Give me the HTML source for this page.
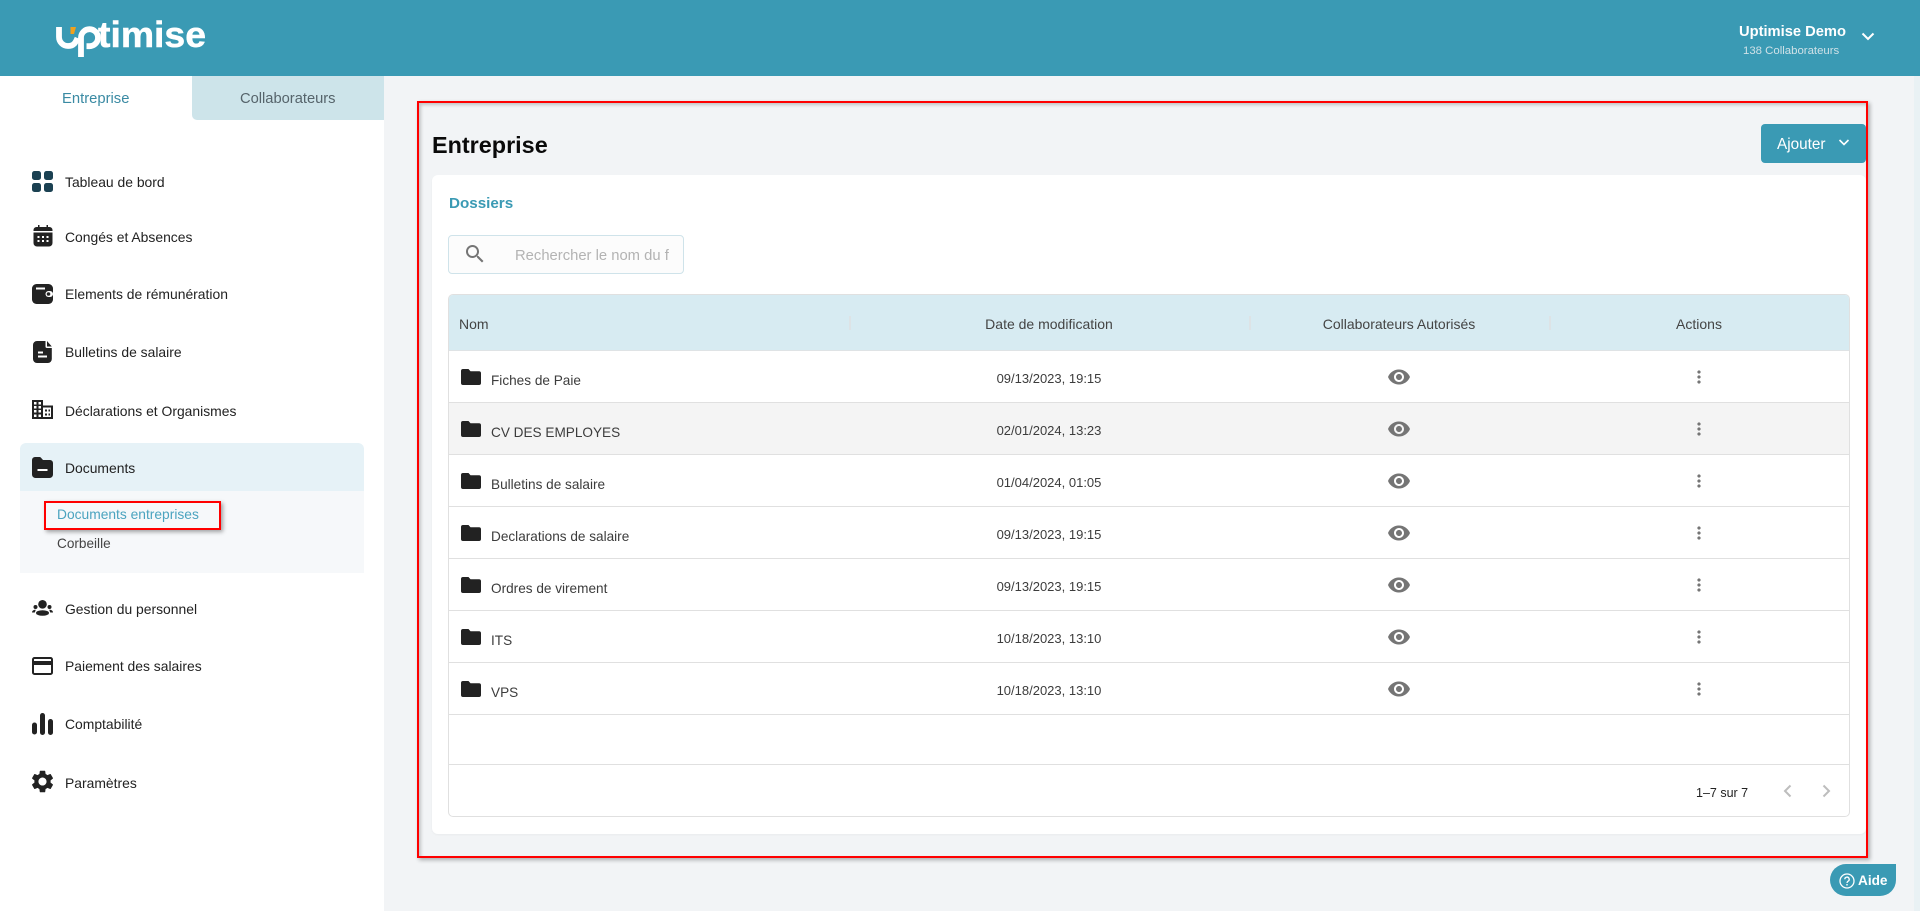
<!DOCTYPE html>
<html lang="fr"><head><meta charset="utf-8"><title>Uptimise</title>
<style>
*{box-sizing:border-box}
html,body{margin:0;padding:0;width:1920px;height:911px;overflow:hidden;background:#f2f4f6;font-family:"Liberation Sans",Arial,sans-serif;color:#222}
.a{position:absolute}
.t{position:absolute;white-space:nowrap;line-height:20px;height:20px}
.n{left:65px;font-size:13.9px;color:#222;margin-top:1px}
.i{position:absolute}
.th{font-size:14px;color:#444;top:314px;text-align:center}
.d{font-size:13px;color:#3c3c3c;text-align:center;width:300px;left:899px;margin-top:1px}
.f{font-size:13.6px;color:#3c3c3c;left:491px;margin-top:1px}
.l{position:absolute;left:449px;width:1400px;height:1px;background:#e0e0e0}
</style></head><body>
<div class="a" style="left:0;top:0;width:1920px;height:76px;background:#3a9ab4"></div>
<svg class="i" style="left:54px;top:16px" width="156" height="44" viewBox="0 0 156 44">
<path d="M5 11V21a9 9 0 0 0 9 9c5.500 0 7.500-3 9.500-8" fill="none" stroke="#fff" stroke-width="5.8"/>
<path d="M16.500 11h5.500l-2 7h-3.500z" fill="#f0a11c"/>
<path d="M27 41V21.500a8.500 8.500 0 1 1 8.500 8.700h-3" fill="none" stroke="#fff" stroke-width="5.8"/>
<text x="44" y="31" font-family="Liberation Sans" font-weight="700" font-size="36" fill="#fff" stroke="#fff" stroke-width=".5" textLength="108" lengthAdjust="spacingAndGlyphs">timise</text>
</svg>
<div class="t" style="left:1739px;top:22px;font-size:14.7px;font-weight:700;color:#fff">Uptimise Demo</div>
<div class="t" style="left:1743px;top:41px;font-size:11.4px;color:#cfe1e7">138 Collaborateurs</div>
<svg class="i" style="left:1861px;top:31px" width="14" height="11" viewBox="0 0 14 11"><path d="M1.500 2.500 7 8l5.500-5.500" fill="none" stroke="#fff" stroke-width="2"/></svg>

<div class="a" style="left:0;top:76px;width:384px;height:835px;background:#fff"></div>
<div class="a" style="left:192px;top:76px;width:192px;height:44px;background:#cde4ea;border-bottom-left-radius:5px"></div>
<div class="t" style="left:62px;top:89px;font-size:14.8px;color:#3a8aa3">Entreprise</div>
<div class="t" style="left:240px;top:89px;font-size:14.7px;color:#56646b">Collaborateurs</div>

<div class="a" style="left:20px;top:443px;width:344px;height:48px;background:#e6f2f7;border-radius:6px 6px 0 0"></div>
<div class="a" style="left:20px;top:491px;width:344px;height:82px;background:#f6f8fa"></div>

<svg class="i" style="left:32px;top:171px" width="21" height="21" viewBox="0 0 21 21" fill="#1b4152"><rect width="9" height="9" rx="2.500"/><rect x="12" width="9" height="9" rx="2.500"/><rect y="12" width="9" height="9" rx="2.500"/><rect x="12" y="12" width="9" height="9" rx="2.500"/></svg>
<div class="t n" style="top:171px">Tableau de bord</div>

<svg class="i" style="left:33px;top:225px" width="20" height="22" viewBox="0 0 20 22" fill="#222"><path d="M5 0h1.500v2h7V0H15v2h1.500A3 3 0 0 1 19.500 5v1H.5V5a3 3 0 0 1 3-3H5z"/><path d="M.5 7.500h19V18a3.500 3.500 0 0 1-3.500 3.500H4A3.500 3.500 0 0 1 .5 18z"/><g fill="#fff"><rect x="4.500" y="11" width="2" height="2"/><rect x="9" y="11" width="2" height="2"/><rect x="13.500" y="11" width="2" height="2"/><rect x="4.500" y="15" width="2" height="2"/><rect x="9" y="15" width="2" height="2"/><rect x="13.500" y="15" width="2" height="2"/></g></svg>
<div class="t n" style="top:226px">Congés et Absences</div>

<svg class="i" style="left:32px;top:284px" width="21" height="20" viewBox="0 0 21 20" fill="#222"><rect width="21" height="20" rx="4.500"/><rect x="4" y="3.500" width="9" height="2" fill="#fff"/><rect x="13.500" y="7" width="7.500" height="6" rx="3" fill="#fff"/><circle cx="16.500" cy="10" r="1.800" fill="#222"/></svg>
<div class="t n" style="top:283px">Elements de rémunération</div>

<svg class="i" style="left:33px;top:341px" width="19" height="22" viewBox="0 0 19 22" fill="#222"><path d="M4 0h8.500v5.500a1.500 1.500 0 0 0 1.500 1.500h4.800V18a4 4 0 0 1-4 4H4a4 4 0 0 1-4-4V4a4 4 0 0 1 4-4z"/><path d="M14 0l4.800 5.500H14z"/><rect x="5" y="10.500" width="5" height="2" fill="#fff"/><rect x="5" y="14.500" width="9" height="2" fill="#fff"/></svg>
<div class="t n" style="top:341px">Bulletins de salaire</div>

<svg class="i" style="left:32px;top:400px" width="21" height="19" viewBox="0 0 21 19" fill="#222"><path d="M0 0h11v5.500h10V19H0z"/><g fill="#fff"><rect x="2" y="2" width="2.500" height="2.500"/><rect x="6.500" y="2" width="2.500" height="2.500"/><rect x="2" y="6" width="2.500" height="2.500"/><rect x="6.500" y="6" width="2.500" height="2.500"/><rect x="2" y="10" width="2.500" height="2.500"/><rect x="6.500" y="10" width="2.500" height="2.500"/><rect x="2" y="14.500" width="2.500" height="2.500"/><rect x="6.500" y="14.500" width="2.500" height="2.500"/><rect x="11" y="7.500" width="8" height="9.500"/></g><g fill="#222"><rect x="13" y="9.500" width="2" height="2"/><rect x="16.500" y="9.500" width="1.500" height="2"/><rect x="13" y="13.500" width="2" height="2"/><rect x="16.500" y="13.500" width="1.500" height="2"/></g></svg>
<div class="t n" style="top:400px">Déclarations et Organismes</div>

<svg class="i" style="left:32px;top:457px" width="21" height="21" viewBox="0 0 21 21" fill="#222"><path d="M3 0h4.500a2 2 0 0 1 1.500.7L11 3h7a3 3 0 0 1 3 3v11.500a3.500 3.500 0 0 1-3.500 3.500h-14A3.500 3.500 0 0 1 0 17.500V3a3 3 0 0 1 3-3z"/><rect x="5.500" y="12" width="10" height="2" fill="#fff"/></svg>
<div class="t n" style="top:457px">Documents</div>

<div class="t" style="left:57px;top:505px;font-size:13.8px;color:#4ba3bf">Documents entreprises</div>
<div class="t" style="left:57px;top:534px;font-size:13.6px;color:#444">Corbeille</div>
<div class="a" style="left:44px;top:501px;width:177px;height:29px;border:2px solid #f00;box-shadow:2px 2px 4px rgba(0,0,0,.35)"></div>

<svg class="i" style="left:32px;top:600px" width="21" height="16" viewBox="0 0 21 16" fill="#222"><circle cx="10.500" cy="4.300" r="4.300"/><ellipse cx="10.500" cy="13" rx="6.500" ry="2.800"/><circle cx="3.500" cy="7" r="2"/><circle cx="17.500" cy="7" r="2"/><path d="M0 12.500c0-1.800 1.500-2.800 3.800-2.800L2.800 12.500z"/><path d="M21 12.500c0-1.800-1.500-2.800-3.800-2.800l1 2.800z"/></svg>
<div class="t n" style="top:598px">Gestion du personnel</div>

<svg class="i" style="left:32px;top:657px" width="21" height="18" viewBox="0 0 21 18"><rect x="1" y="1" width="19" height="16" rx="1.500" fill="none" stroke="#222" stroke-width="2"/><rect x="1" y="4" width="19" height="4" fill="#222"/></svg>
<div class="t n" style="top:655px">Paiement des salaires</div>

<svg class="i" style="left:32px;top:713px" width="21" height="22" viewBox="0 0 21 22" fill="#222"><rect y="9.500" width="5" height="12" rx="2.500"/><rect x="8" width="5" height="22" rx="2.500"/><rect x="16" y="6" width="5" height="16" rx="2.500"/></svg>
<div class="t n" style="top:713px">Comptabilité</div>

<svg class="i" style="left:29px;top:768px" width="27" height="27" viewBox="0 0 24 24" fill="#222"><path d="M19.140 12.940c.04-.3.060-.61.060-.94 0-.32-.02-.64-.07-.94l2.030-1.580c.18-.14.230-.41.120-.61l-1.920-3.320c-.12-.22-.37-.29-.59-.22l-2.390.96c-.5-.38-1.030-.7-1.620-.94l-.36-2.540c-.04-.24-.24-.41-.48-.41h-3.840c-.24 0-.43.170-.47.410l-.36 2.540c-.59.240-1.130.570-1.620.940l-2.390-.96c-.22-.08-.47 0-.59.220L2.740 8.870c-.12.210-.08.470.120.610l2.030 1.580c-.05.300-.09.630-.09.940s.020.640.070.940l-2.030 1.580c-.18.140-.23.410-.12.610l1.920 3.320c.120.220.370.290.590.220l2.390-.96c.500.380 1.030.700 1.620.940l.360 2.540c.050.240.240.410.480.410h3.840c.240 0 .440-.17.470-.41l.360-2.540c.590-.24 1.130-.56 1.620-.94l2.390.96c.220.080.470 0 .590-.22l1.920-3.320c.120-.22.070-.47-.12-.61l-2.010-1.580zM12 15.600c-1.980 0-3.600-1.620-3.600-3.600s1.620-3.600 3.600-3.600 3.600 1.620 3.600 3.600-1.620 3.600-3.600 3.600z"/></svg>
<div class="t n" style="top:772px">Paramètres</div>

<div class="a" style="left:1914px;top:76px;width:6px;height:835px;background:#e9f1f4"></div>

<div class="a" style="left:432px;top:175px;width:1434px;height:659px;background:#fff;border-radius:6px;box-shadow:0 1px 2px rgba(0,0,0,.04)"></div>
<div class="t" style="left:432px;top:135px;font-size:23.4px;font-weight:700;color:#0a0a0a;line-height:20px">Entreprise</div>
<div class="a" style="left:1761px;top:124px;width:105px;height:39px;background:#3a9ab4;border-radius:4px"></div>
<div class="t" style="left:1777px;top:135px;font-size:15.3px;color:#fff">Ajouter</div>
<svg class="i" style="left:1838px;top:138px" width="12" height="9" viewBox="0 0 12 9"><path d="M1.500 2 6 6.500 10.500 2" fill="none" stroke="#fff" stroke-width="1.600"/></svg>

<div class="t" style="left:449px;top:194px;font-size:15.2px;font-weight:700;color:#3a9ab4">Dossiers</div>
<div class="a" style="left:448px;top:235px;width:236px;height:39px;background:#fcfcfc;border:1px solid #cfe3ea;border-radius:4px"></div>
<svg class="i" style="left:463px;top:242px" width="24" height="24" viewBox="0 0 24 24" fill="#757575"><path d="M15.500 14h-.79l-.28-.27C15.410 12.590 16 11.110 16 9.500 16 5.910 13.090 3 9.500 3S3 5.910 3 9.500 5.910 16 9.500 16c1.610 0 3.090-.59 4.230-1.570l.27.28v.79l5 4.990L20.490 19l-4.990-5zm-6 0C7.010 14 5 11.990 5 9.500S7.010 5 9.500 5 14 7.010 14 9.500 11.990 14 9.500 14z"/></svg>
<div class="t" style="left:515px;top:246px;width:154px;overflow:hidden;font-size:14.8px;color:#b3b3b3">Rechercher le nom du fichier</div>

<div class="a" style="left:448px;top:294px;width:1402px;height:523px;border:1px solid #e0e0e0;border-radius:5px;overflow:hidden;background:#fff">
 <div class="a" style="left:0;top:0;width:1400px;height:56px;background:#d7ebf2;border-bottom:1px solid #dfe3e5"></div>
 <div class="a" style="left:0;top:108px;width:1400px;height:52px;background:#f4f4f4"></div>
</div>
<div class="t th" style="left:459px">Nom</div>
<div class="t th" style="left:899px;width:300px">Date de modification</div>
<div class="t th" style="left:1249px;width:300px">Collaborateurs Autorisés</div>
<div class="t th" style="left:1549px;width:300px">Actions</div>
<div class="a" style="left:849px;top:316px;width:2px;height:14px;background:#dde3e6"></div>
<div class="a" style="left:1249px;top:316px;width:2px;height:14px;background:#dde3e6"></div>
<div class="a" style="left:1549px;top:316px;width:2px;height:14px;background:#dde3e6"></div>

<div class="l" style="top:402px"></div>
<div class="l" style="top:454px"></div>
<div class="l" style="top:506px"></div>
<div class="l" style="top:558px"></div>
<div class="l" style="top:610px"></div>
<div class="l" style="top:662px"></div>
<div class="l" style="top:714px"></div>
<div class="l" style="top:764px"></div>

<svg width="0" height="0" style="position:absolute"><defs>
<symbol id="fo" viewBox="0 0 20 16"><path d="M2 0h5.500l2 2.200H18a2 2 0 0 1 2 2V14a2 2 0 0 1-2 2H2a2 2 0 0 1-2-2V2a2 2 0 0 1 2-2z" fill="#222"/></symbol>
<symbol id="ey" viewBox="0 0 24 24"><path fill="#757575" d="M12 4.500C7 4.500 2.730 7.610 1 12c1.730 4.390 6 7.500 11 7.500s9.270-3.110 11-7.500c-1.730-4.390-6-7.500-11-7.500zM12 17c-2.760 0-5-2.240-5-5s2.240-5 5-5 5 2.240 5 5-2.240 5-5 5zm0-8c-1.660 0-3 1.340-3 3s1.340 3 3 3 3-1.340 3-3-1.340-3-3-3z"/></symbol>
<symbol id="mv" viewBox="0 0 24 24"><path fill="#757575" d="M12 8c1.100 0 2-.9 2-2s-.9-2-2-2-2 .9-2 2 .9 2 2 2zm0 2c-1.100 0-2 .9-2 2s.9 2 2 2 2-.9 2-2-.9-2-2-2zm0 6c-1.100 0-2 .9-2 2s.9 2 2 2 2-.9 2-2-.9-2-2-2z"/></symbol>
</defs></svg>

<svg class="i" style="left:461px;top:369px" width="20" height="16"><use href="#fo"/></svg>
<div class="t f" style="top:370px">Fiches de Paie</div>
<div class="t d" style="top:368px">09/13/2023, 19:15</div>
<svg class="i" style="left:1387px;top:365px" width="24" height="24"><use href="#ey"/></svg>
<svg class="i" style="left:1689px;top:367px" width="20" height="20"><use href="#mv"/></svg>

<svg class="i" style="left:461px;top:421px" width="20" height="16"><use href="#fo"/></svg>
<div class="t f" style="top:422px">CV DES EMPLOYES</div>
<div class="t d" style="top:420px">02/01/2024, 13:23</div>
<svg class="i" style="left:1387px;top:417px" width="24" height="24"><use href="#ey"/></svg>
<svg class="i" style="left:1689px;top:419px" width="20" height="20"><use href="#mv"/></svg>

<svg class="i" style="left:461px;top:473px" width="20" height="16"><use href="#fo"/></svg>
<div class="t f" style="top:474px">Bulletins de salaire</div>
<div class="t d" style="top:472px">01/04/2024, 01:05</div>
<svg class="i" style="left:1387px;top:469px" width="24" height="24"><use href="#ey"/></svg>
<svg class="i" style="left:1689px;top:471px" width="20" height="20"><use href="#mv"/></svg>

<svg class="i" style="left:461px;top:525px" width="20" height="16"><use href="#fo"/></svg>
<div class="t f" style="top:526px">Declarations de salaire</div>
<div class="t d" style="top:524px">09/13/2023, 19:15</div>
<svg class="i" style="left:1387px;top:521px" width="24" height="24"><use href="#ey"/></svg>
<svg class="i" style="left:1689px;top:523px" width="20" height="20"><use href="#mv"/></svg>

<svg class="i" style="left:461px;top:577px" width="20" height="16"><use href="#fo"/></svg>
<div class="t f" style="top:578px">Ordres de virement</div>
<div class="t d" style="top:576px">09/13/2023, 19:15</div>
<svg class="i" style="left:1387px;top:573px" width="24" height="24"><use href="#ey"/></svg>
<svg class="i" style="left:1689px;top:575px" width="20" height="20"><use href="#mv"/></svg>

<svg class="i" style="left:461px;top:629px" width="20" height="16"><use href="#fo"/></svg>
<div class="t f" style="top:630px">ITS</div>
<div class="t d" style="top:628px">10/18/2023, 13:10</div>
<svg class="i" style="left:1387px;top:625px" width="24" height="24"><use href="#ey"/></svg>
<svg class="i" style="left:1689px;top:627px" width="20" height="20"><use href="#mv"/></svg>

<svg class="i" style="left:461px;top:681px" width="20" height="16"><use href="#fo"/></svg>
<div class="t f" style="top:682px">VPS</div>
<div class="t d" style="top:680px">10/18/2023, 13:10</div>
<svg class="i" style="left:1387px;top:677px" width="24" height="24"><use href="#ey"/></svg>
<svg class="i" style="left:1689px;top:679px" width="20" height="20"><use href="#mv"/></svg>

<div class="t" style="left:1696px;top:783px;font-size:12.5px;color:#222">1–7 sur 7</div>
<svg class="i" style="left:1781px;top:783px" width="12" height="16" viewBox="0 0 12 16"><path d="M9.500 2.500 4 8l5.500 5.500" fill="none" stroke="#bdbdbd" stroke-width="2"/></svg>
<svg class="i" style="left:1821px;top:783px" width="12" height="16" viewBox="0 0 12 16"><path d="M2.500 2.500 8 8l-5.500 5.500" fill="none" stroke="#bdbdbd" stroke-width="2"/></svg>

<div class="a" style="left:417px;top:101px;width:1451px;height:757px;border:2px solid #f00;box-shadow:2px 2px 4px rgba(0,0,0,.3),inset 2px 2px 3px rgba(0,0,0,.2)"></div>

<div class="a" style="left:1830px;top:864px;width:66px;height:32px;background:#3a9ab4;border-radius:16px 0 16px 16px"></div>
<svg class="i" style="left:1839px;top:873px" width="16" height="16" viewBox="0 0 16 16"><circle cx="8" cy="8" r="7" fill="none" stroke="#fff" stroke-width="1.300"/><path d="M5.800 6.300a2.200 2.200 0 1 1 3.300 1.900c-.8.500-1.100.9-1.100 1.800" fill="none" stroke="#fff" stroke-width="1.300"/><rect x="7.300" y="11" width="1.400" height="1.500" fill="#fff"/></svg>
<div class="t" style="left:1858px;top:871px;font-size:13.6px;font-weight:700;color:#fff">Aide</div>
</body></html>
